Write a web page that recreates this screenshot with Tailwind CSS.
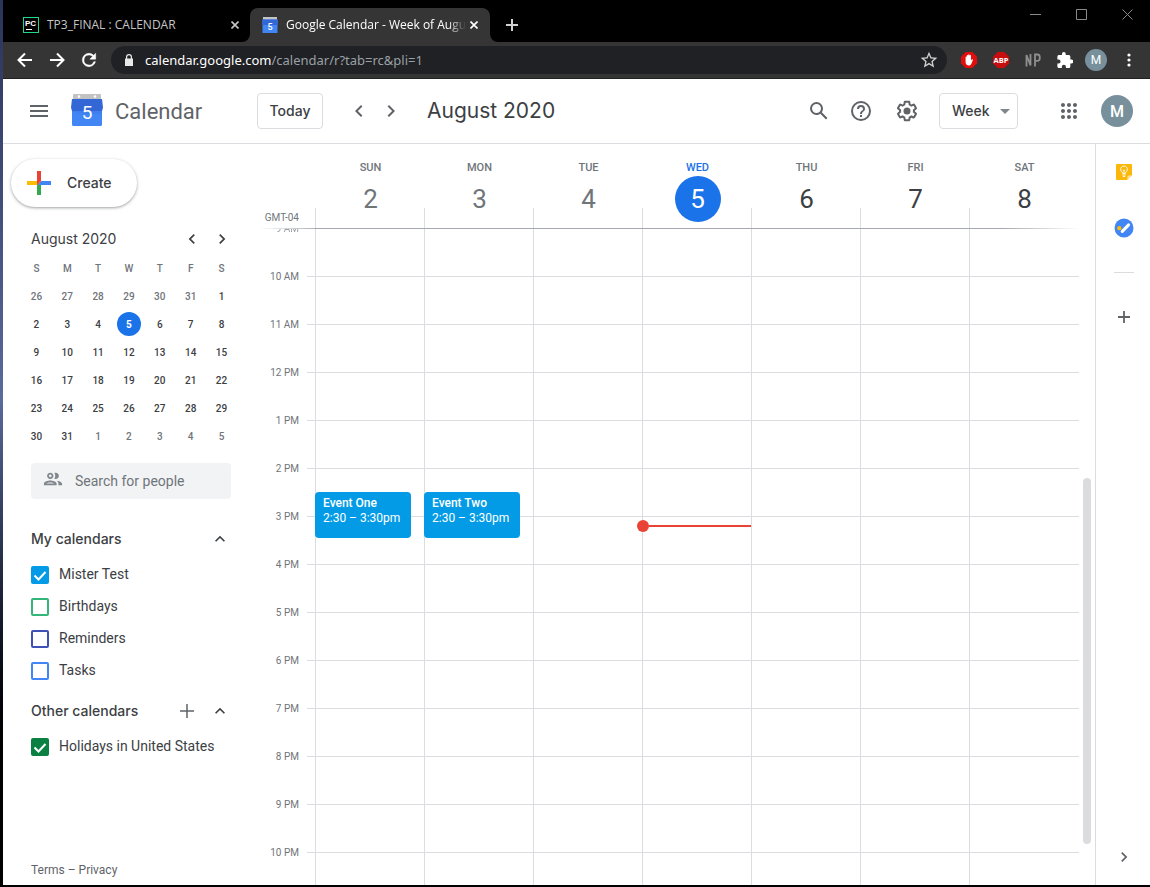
<!DOCTYPE html>
<html lang="en">
<head>
<meta charset="utf-8">
<title>Google Calendar - Week of August 2, 2020</title>
<script src="https://cdn.jsdelivr.net/npm/@tailwindcss/browser@4"></script>
</head>
<body class="h-screen overflow-hidden bg-[#0a0a10] font-[Roboto,sans-serif] text-[#3c4043]">
<div class="flex h-full flex-col bg-linear-to-b from-[#2c3358] from-0% via-[#5a6a9c] via-45% to-black to-88% pb-[2px] pl-[3px]">

  <!-- Browser tabs -->
  <div class="flex h-[42px] shrink-0 items-end bg-black font-['Open_Sans',sans-serif] text-xs text-white" role="tablist">
    <div class="flex h-[34px] w-[247px] items-center pr-[7px] pl-5 text-[#c6c6c6]">
      <svg class="mr-2 size-4 shrink-0" viewBox="0 0 16 16"><rect width="16" height="16" fill="#21d789"/><rect x="1" y="1" width="14" height="14" fill="#000"/><text x="2" y="9" font-family="Liberation Sans" font-weight="700" font-size="8" fill="#fff">PC</text><path d="M3 12h6v1H3z" fill="#fff"/></svg>
      <button role="tab" class="flex-1 text-left whitespace-nowrap">TP3_FINAL : CALENDAR</button>
      <button aria-label="Close tab" class="grid size-4 place-items-center"><svg class="size-2" viewBox="0 0 8 8" fill="none" stroke="currentColor" stroke-width="1.6"><path d="M.5.5l7 7M7.5.5l-7 7"/></svg></button>
    </div>
    <div class="relative flex h-[34px] w-[240px] items-center rounded-t-lg bg-[#353535] pr-2 pl-3">
      <svg class="absolute bottom-0 -left-2 size-2" viewBox="0 0 8 8"><path d="M8 0v8H0a8 8 0 0 0 8-8z" fill="#353535"/></svg>
      <svg class="absolute -right-2 bottom-0 size-2" viewBox="0 0 8 8"><path d="M0 0v8h8A8 8 0 0 1 0 0z" fill="#353535"/></svg>
      <svg class="mr-2 size-4 shrink-0" viewBox="0 0 32 32"><path d="M2 0h28v6H2z" fill="#c4c4c4"/><path d="M1 5h30l1 8-1 3v16H1V16l-1-3z" fill="#4285f4"/><path d="M1 5h30l1 8-2 3H2l-2-3z" fill="#3367d6"/><text x="16" y="25" text-anchor="middle" font-family="Roboto" font-weight="500" font-size="18" fill="#fff">5</text></svg>
      <button role="tab" aria-selected="true" class="flex-1 overflow-hidden mask-r-from-90% text-left whitespace-nowrap">Google Calendar - Week of Augu</button>
      <button aria-label="Close tab" class="grid size-4 shrink-0 place-items-center"><svg class="size-2" viewBox="0 0 8 8" fill="none" stroke="currentColor" stroke-width="1.6"><path d="M.5.5l7 7M7.5.5l-7 7"/></svg></button>
    </div>
    <button aria-label="New tab" class="ml-4 grid h-[34px] w-3 place-items-center text-[#d0d0d0]"><svg class="size-3" viewBox="0 0 12 12" fill="none" stroke="currentColor" stroke-width="2"><path d="M6 0v12M0 6h12"/></svg></button>
    <div class="ml-auto flex h-full w-[138px] text-[#8a8a8a]">
      <button aria-label="Minimize" class="flex h-7 flex-1 items-center justify-center"><svg class="size-[11px]" viewBox="0 0 11 11" stroke="currentColor" fill="none"><path d="M0 5.5h11"/></svg></button>
      <button aria-label="Maximize" class="flex h-7 flex-1 items-center justify-center"><svg class="size-[11px]" viewBox="0 0 11 11" stroke="currentColor" fill="none"><path d="M.5.5h10v10H.5z"/></svg></button>
      <button aria-label="Close" class="flex h-7 flex-1 items-center justify-center"><svg class="size-[11px]" viewBox="0 0 11 11" stroke="currentColor" fill="none"><path d="M.5.5l10 10M10.5.5l-10 10"/></svg></button>
    </div>
  </div>

  <!-- Browser toolbar -->
  <div class="flex h-[37px] shrink-0 items-center border-b border-[#202124] bg-[#353535] pr-[11px] pl-3 text-white">
    <div class="flex w-24 gap-3">
      <button aria-label="Back"><svg class="size-5" viewBox="0 0 20 20" fill="none" stroke="currentColor" stroke-width="2"><path d="M17 10H4M10 3.500L3.500 10l6.500 6.500"/></svg></button>
      <button aria-label="Forward"><svg class="size-5" viewBox="0 0 20 20" fill="none" stroke="currentColor" stroke-width="2"><path d="M3 10h13M10 3.500l6.500 6.500-6.500 6.500"/></svg></button>
      <button aria-label="Reload"><svg class="size-5" viewBox="0 0 24 24" fill="currentColor"><path stroke="currentColor" stroke-width=".6" d="M17.650 6.350A7.960 7.960 0 0 0 12 4a8 8 0 1 0 7.730 10h-2.080A6 6 0 1 1 12 6c1.660 0 3.140.69 4.220 1.780L13 11h7V4z"/></svg></button>
    </div>
    <div class="flex h-7 flex-1 items-center rounded-full bg-[#202124] pr-2 pl-3">
      <svg class="mr-[10px] size-3 shrink-0 text-[#e8e8e8]" viewBox="0 0 12 12" fill="currentColor"><path fill-rule="evenodd" d="M10 4.500H9V3a3 3 0 0 0-6 0v1.500H2V12h8zM4.200 4.500V3a1.800 1.800 0 0 1 3.600 0v1.500z"/></svg>
      <div role="textbox" aria-label="Address" contenteditable="true" class="flex-1 pt-px font-['Noto_Sans',sans-serif] text-[13px] text-[#9aa0a6]"><span class="text-white">calendar.google.com</span>/calendar/r?tab=rc&amp;pli=1</div>
      <button aria-label="Bookmark this tab"><svg class="size-5 text-[#d0d0d0]" viewBox="0 0 24 24" fill="currentColor"><path d="M22 9.240l-7.190-.62L12 2 9.190 8.630 2 9.240l5.460 4.730L5.820 21 12 17.270 18.180 21l-1.630-7.030zM12 15.400l-3.760 2.270 1-4.280-3.320-2.880 4.380-.38L12 6.100l1.710 4.040 4.380.38-3.320 2.880 1 4.280z"/></svg></button>
    </div>
    <div class="ml-[14px] flex items-center gap-4">
      <button aria-label="AdBlock"><svg class="size-4" viewBox="0 0 16 16"><path d="M4.700 0h6.600L16 4.700v6.600L11.300 16H4.700L0 11.300V4.700z" fill="#e40d0d"/><path d="M4.600 8.500V5c0-.8 1.200-.8 1.200 0v2.500V3.700c0-.9 1.400-.9 1.400 0V7 3c0-.9 1.400-.9 1.400 0v4-3.300c0-.9 1.400-.9 1.400 0V8.500l.7-1c.5-.6 1.400-.2 1.200.5l-1.400 3.400C9.900 12.800 9 13.400 8 13.400c-2.200 0-3.400-1.200-3.400-3.200z" fill="#fff"/></svg></button>
      <button aria-label="Adblock Plus"><svg class="size-4" viewBox="0 0 16 16"><path d="M4.700 0h6.600L16 4.700v6.600L11.300 16H4.700L0 11.300V4.700z" fill="#c70d0d"/><text x="8" y="10.700" text-anchor="middle" font-family="Open Sans" font-weight="700" font-size="7.500" fill="#fff">ABP</text></svg></button>
      <button aria-label="NP" class="w-4 text-center"><svg class="h-4 w-4" viewBox="0 0 16 16" fill="none" stroke="#8f8f8f" stroke-width="1.800"><path d="M1.500 14.500V3l4 10.500V2M10 14.500V2.500h2.500a2.200 3 0 0 1 0 6.300H10"/></svg></button>
      <button aria-label="Extensions"><svg class="size-4" viewBox="1.500 1 21 21" fill="currentColor"><path d="M20.500 11H19V7a2 2 0 0 0-2-2h-4V3.500a2.500 2.500 0 0 0-5 0V5H4a2 2 0 0 0-2 2v3.800h1.500a2.700 2.700 0 0 1 0 5.400H2V20c0 1.100.9 2 2 2h3.800v-1.500a2.700 2.700 0 0 1 5.400 0V22H17a2 2 0 0 0 2-2v-4h1.500a2.500 2.500 0 0 0 0-5z"/></svg></button>
    </div>
    <button aria-label="Profile" class="ml-3 grid size-[22px] place-items-center rounded-full bg-[#78909c] text-xs">M</button>
    <button aria-label="Menu" class="ml-3 grid h-5 w-5 place-items-center"><svg class="h-[14px] w-[4px]" viewBox="0 0 4 14" fill="currentColor"><circle cx="2" cy="2" r="1.600"/><circle cx="2" cy="7" r="1.600"/><circle cx="2" cy="12" r="1.600"/></svg></button>
  </div>

  <div class="flex min-h-0 flex-1 flex-col bg-white">
    <!-- App header -->
    <header class="flex h-[65px] shrink-0 items-center border-b border-[#dadce0] pr-[17px] pl-6 font-[Inter,sans-serif] text-[#5f6368]">
      <button aria-label="Main menu" class="grid size-6 place-items-center"><svg class="size-6" viewBox="0 0 24 24" fill="currentColor"><path d="M3 18h18v-2H3zm0-5h18v-2H3zm0-7v2h18V6z"/></svg></button>
      <svg class="mb-[2px] ml-5 size-8" viewBox="0 0 32 32"><path d="M3 0h26a1 1 0 0 1 1 1v5H2V1a1 1 0 0 1 1-1z" fill="#c2c2c2"/><circle cx="8" cy="2.500" r="1.300" fill="#fff"/><circle cx="24" cy="2.500" r="1.300" fill="#fff"/><path d="M1 15h30v15.500a1.500 1.500 0 0 1-1.500 1.500h-27A1.500 1.500 0 0 1 1 30.500z" fill="#4285f4"/><path d="M1 5h30l1 8.500-1 3.500H1l-1-3.500z" fill="#3367d6"/><path d="M1 17h30l-1 3H14z" fill="#3b78e7" opacity=".5"/><text x="16" y="25" text-anchor="middle" font-family="Roboto" font-size="19" fill="#fff">5</text></svg>
      <h1 class="ml-3 w-[142px] font-[Roboto,sans-serif] text-[22px]">Calendar</h1>
      <button class="h-9 w-[66px] rounded border border-[#dadce0] pb-px text-sm font-medium text-[#3c4043]">Today</button>
      <div class="ml-6 flex gap-2">
        <button aria-label="Previous week"><svg class="size-6" viewBox="0 0 24 24" fill="currentColor"><path d="M15.410 7.410L14 6l-6 6 6 6 1.410-1.410L10.830 12z"/></svg></button>
        <button aria-label="Next week"><svg class="size-6" viewBox="0 0 24 24" fill="currentColor"><path d="M10 6L8.590 7.410 13.170 12l-4.580 4.590L10 18l6-6z"/></svg></button>
      </div>
      <h2 class="ml-6 text-[21px] text-[#3c4043]">August 2020</h2>
      <div class="ml-auto flex items-center">
        <button aria-label="Search"><svg class="size-6" viewBox="0 0 24 24" fill="currentColor"><path d="M20.490 19l-5.730-5.730C15.530 12.200 16 10.910 16 9.500A6.500 6.500 0 1 0 9.500 16c1.410 0 2.700-.47 3.770-1.240L19 20.490 20.490 19zM5 9.500C5 7.010 7.010 5 9.500 5S14 7.010 14 9.500 11.990 14 9.500 14 5 11.990 5 9.500z"/></svg></button>
        <button aria-label="Support" class="ml-[18px]"><svg class="size-6" viewBox="0 0 24 24" fill="currentColor"><path d="M11 18h2v-2h-2zm1-16a10 10 0 1 0 0 20 10 10 0 0 0 0-20zm0 18a8 8 0 1 1 0-16 8 8 0 0 1 0 16zm0-14a4 4 0 0 0-4 4h2a2 2 0 1 1 4 0c0 2-3 1.750-3 5h2c0-2.250 3-2.500 3-5a4 4 0 0 0-4-4z"/></svg></button>
        <button aria-label="Settings menu" class="ml-[22px]"><svg class="size-6" viewBox="0 0 24 24" fill="currentColor"><path d="M13.850 22.250h-3.700c-.74 0-1.360-.54-1.450-1.270l-.27-1.890c-.27-.14-.53-.29-.79-.46l-1.800.72c-.7.26-1.470-.03-1.810-.65L2.200 15.530c-.35-.66-.2-1.440.36-1.880l1.530-1.190c-.01-.15-.02-.3-.02-.46 0-.15.01-.31.02-.46l-1.520-1.190c-.59-.45-.74-1.260-.37-1.880l1.850-3.190c.34-.62 1.110-.9 1.790-.63l1.810.73c.26-.17.52-.32.78-.46l.27-1.910c.09-.7.71-1.250 1.440-1.250h3.700c.74 0 1.360.54 1.450 1.270l.27 1.890c.27.14.53.29.79.46l1.800-.72c.71-.26 1.480.03 1.820.65l1.840 3.180c.36.66.2 1.440-.36 1.880l-1.520 1.190c.01.15.02.3.02.46s-.01.31-.02.46l1.520 1.190c.56.45.72 1.230.37 1.860l-1.860 3.220c-.34.62-1.110.9-1.800.63l-1.800-.72c-.26.17-.52.32-.78.46l-.27 1.910c-.1.68-.72 1.220-1.460 1.220zm-3.230-2h2.760l.37-2.550.53-.22c.44-.18.88-.44 1.340-.78l.45-.34 2.380.96 1.380-2.400-2.030-1.580.07-.56c.03-.26.06-.51.06-.78s-.03-.53-.06-.78l-.07-.56 2.030-1.580-1.390-2.400-2.390.96-.45-.35c-.42-.32-.87-.58-1.330-.77l-.52-.22-.37-2.550h-2.760l-.37 2.550-.53.21c-.44.19-.88.44-1.340.79l-.45.33-2.380-.95-1.390 2.390 2.030 1.580-.07.56a7 7 0 0 0-.06.79c0 .26.02.53.06.78l.07.56-2.030 1.580 1.380 2.400 2.390-.96.45.35c.43.33.86.58 1.330.77l.53.22.38 2.550z"/><circle cx="12" cy="12" r="3.500"/></svg></button>
        <div class="relative ml-5">
          <select aria-label="View" class="h-9 w-[79px] appearance-none rounded border border-[#dadce0] bg-white pb-px pl-3 text-sm font-medium text-[#3c4043]"><option>Week</option><option>Day</option><option>Month</option></select>
          <svg class="pointer-events-none absolute top-4 right-2 h-[5px] w-[10px]" viewBox="0 0 10 5" fill="#80868b"><path d="M0 0h10L5 5z"/></svg>
        </div>
        <button aria-label="Google apps" class="ml-[39px]"><svg class="size-6" viewBox="0 0 24 24" fill="currentColor"><path d="M6 8c1.100 0 2-.9 2-2s-.9-2-2-2-2 .9-2 2 .9 2 2 2zm6 12c1.100 0 2-.9 2-2s-.9-2-2-2-2 .9-2 2 .9 2 2 2zm-6 0c1.100 0 2-.9 2-2s-.9-2-2-2-2 .9-2 2 .9 2 2 2zm0-6c1.100 0 2-.9 2-2s-.9-2-2-2-2 .9-2 2 .9 2 2 2zm6 0c1.100 0 2-.9 2-2s-.9-2-2-2-2 .9-2 2 .9 2 2 2zm4-8c0 1.100.9 2 2 2s2-.9 2-2-.9-2-2-2-2 .9-2 2zm-4 2c1.100 0 2-.9 2-2s-.9-2-2-2-2 .9-2 2 .9 2 2 2zm6 6c1.100 0 2-.9 2-2s-.9-2-2-2-2 .9-2 2 .9 2 2 2zm0 6c1.100 0 2-.9 2-2s-.9-2-2-2-2 .9-2 2 .9 2 2 2z"/></svg></button>
        <button aria-label="Account" class="ml-5 grid size-8 place-items-center rounded-full bg-[#78909c] pt-px font-[Roboto,sans-serif] text-base font-medium text-white">M</button>
      </div>
    </header>

    <div class="flex min-h-0 flex-1">
      <!-- Sidebar -->
      <aside class="flex w-64 shrink-0 flex-col pt-[15px] pb-[7px] pl-7">
        <button class="-ml-5 flex h-12 w-[126px] items-center gap-[10px] rounded-full bg-white pl-[10px] font-[Inter,sans-serif] text-sm font-medium shadow-[0_1px_2px_0_rgba(60,64,67,0.3),0_1px_3px_1px_rgba(60,64,67,0.15)]">
          <svg class="size-9" viewBox="0 0 36 36"><path fill="#34A853" d="M16 16v14h4V20z"/><path fill="#4285F4" d="M30 16H20l-4 4h14z"/><path fill="#FBBC05" d="M6 16v4h10l4-4z"/><path fill="#EA4335" d="M20 16V6h-4v14z"/></svg>
          <span class="pb-px">Create</span>
        </button>
        <div class="mt-[17px] flex h-[30px] items-center font-[Inter,sans-serif]">
          <h2 class="w-[147px] pb-px text-sm">August 2020</h2>
          <button aria-label="Previous month" class="ml-1"><svg class="size-5" viewBox="0 0 24 24" fill="currentColor"><path d="M15.410 7.410L14 6l-6 6 6 6 1.410-1.410L10.830 12z"/></svg></button>
          <button aria-label="Next month" class="ml-[10px]"><svg class="size-5" viewBox="0 0 24 24" fill="currentColor"><path d="M10 6L8.590 7.410 13.170 12l-4.580 4.590L10 18l6-6z"/></svg></button>
        </div>
        <table class="-ml-[10px] w-[216px] table-fixed text-center text-[10px] font-medium">
          <thead class="text-[#70757a]"><tr class="h-7"><th class="font-medium">S</th><th class="font-medium">M</th><th class="font-medium">T</th><th class="font-medium">W</th><th class="font-medium">T</th><th class="font-medium">F</th><th class="font-medium">S</th></tr></thead>
          <tbody>
            <tr class="h-7"><td class="text-[#70757a]">26</td><td class="text-[#70757a]">27</td><td class="text-[#70757a]">28</td><td class="text-[#70757a]">29</td><td class="text-[#70757a]">30</td><td class="text-[#70757a]">31</td><td>1</td></tr>
            <tr class="h-7"><td>2</td><td>3</td><td>4</td><td class="p-0"><span class="mx-auto grid size-6 place-items-center rounded-full bg-[#1a73e8] font-bold text-white">5</span></td><td>6</td><td>7</td><td>8</td></tr>
            <tr class="h-7"><td>9</td><td>10</td><td>11</td><td>12</td><td>13</td><td>14</td><td>15</td></tr>
            <tr class="h-7"><td>16</td><td>17</td><td>18</td><td>19</td><td>20</td><td>21</td><td>22</td></tr>
            <tr class="h-7"><td>23</td><td>24</td><td>25</td><td>26</td><td>27</td><td>28</td><td>29</td></tr>
            <tr class="h-7"><td>30</td><td>31</td><td class="text-[#70757a]">1</td><td class="text-[#70757a]">2</td><td class="text-[#70757a]">3</td><td class="text-[#70757a]">4</td><td class="text-[#70757a]">5</td></tr>
          </tbody>
        </table>
        <label class="mt-[13px] flex h-9 w-[200px] items-center rounded bg-[#f1f3f4] pl-3">
          <svg class="mb-1 size-5 text-[#80868b]" viewBox="1 1 22 22" fill="currentColor"><path d="M9 13.750c-2.340 0-7 1.170-7 3.500V19h14v-1.750c0-2.330-4.660-3.500-7-3.500zM4.340 17c.84-.58 2.870-1.250 4.660-1.250s3.820.67 4.660 1.250zM9 12c1.930 0 3.500-1.570 3.500-3.500S10.930 5 9 5 5.500 6.570 5.500 8.500 7.070 12 9 12zm0-5c.83 0 1.500.67 1.500 1.500S9.830 10 9 10s-1.500-.67-1.500-1.500S8.170 7 9 7zm7.040 6.810c1.160.84 1.960 1.960 1.960 3.440V19h4v-1.750c0-2.020-3.500-3.170-5.960-3.440zM15 12c1.930 0 3.500-1.570 3.500-3.500S16.930 5 15 5c-.54 0-1.040.13-1.500.35.63.89 1 1.980 1 3.150s-.37 2.260-1 3.150c.46.22.96.35 1.500.35z"/></svg>
          <input type="text" aria-label="Search for people" placeholder="Search for people" class="ml-3 w-36 bg-transparent text-sm outline-none placeholder:text-[#70757a]">
        </label>

        <div class="mt-6 flex h-8 w-[200px] items-center justify-between font-[Inter,sans-serif] text-sm font-medium">
          <h3 class="pb-px">My calendars</h3>
          <button aria-label="Collapse my calendars" class="mr-px"><svg class="size-5" viewBox="0 0 24 24" fill="currentColor"><path d="M12 8l-6 6 1.410 1.410L12 10.830l4.590 4.580L18 14z"/></svg></button>
        </div>
        <div class="mt-1 text-sm">
          <label class="flex h-8 items-center gap-[10px]"><span class="grid size-[18px]"><input type="checkbox" checked class="col-start-1 row-start-1 size-[18px] appearance-none rounded-xs border-2 border-[#039be5] checked:bg-[#039be5]"><svg class="col-start-1 row-start-1 size-[18px]" viewBox="0 0 18 18" fill="none" stroke="#fff" stroke-width="2"><path d="M3.500 9.500l4 4 7-7.500"/></svg></span><span class="pb-[2px]">Mister Test</span></label>
          <label class="flex h-8 items-center gap-[10px]"><input type="checkbox" class="size-[18px] appearance-none rounded-xs border-2 border-[#33b679]"><span class="pb-[2px]">Birthdays</span></label>
          <label class="flex h-8 items-center gap-[10px]"><input type="checkbox" class="size-[18px] appearance-none rounded-xs border-2 border-[#3f51b5]"><span class="pb-[2px]">Reminders</span></label>
          <label class="flex h-8 items-center gap-[10px]"><input type="checkbox" class="size-[18px] appearance-none rounded-xs border-2 border-[#4285f4]"><span class="pb-[2px]">Tasks</span></label>
        </div>
        <div class="mt-2 flex h-8 w-[200px] items-center font-[Inter,sans-serif] text-sm font-medium">
          <h3 class="pb-px">Other calendars</h3>
          <button aria-label="Add other calendars" class="mr-[13px] ml-auto text-[#5f6368]"><svg class="size-5" viewBox="0 0 20 20" fill="none" stroke="currentColor" stroke-width="1.500"><path d="M10 3v14M3 10h14"/></svg></button>
          <button aria-label="Collapse other calendars" class="mr-px"><svg class="size-5" viewBox="0 0 24 24" fill="currentColor"><path d="M12 8l-6 6 1.410 1.410L12 10.830l4.590 4.580L18 14z"/></svg></button>
        </div>
        <label class="mt-1 flex h-8 items-center gap-[10px] text-sm"><span class="grid size-[18px]"><input type="checkbox" checked class="col-start-1 row-start-1 size-[18px] appearance-none rounded-xs border-2 border-[#0b8043] checked:bg-[#0b8043]"><svg class="col-start-1 row-start-1 size-[18px]" viewBox="0 0 18 18" fill="none" stroke="#fff" stroke-width="2"><path d="M3.500 9.500l4 4 7-7.500"/></svg></span><span class="pb-[2px]">Holidays in United States</span></label>
        <p class="mt-auto text-xs text-[#5f6368]"><a href="#terms">Terms</a> – <a href="#privacy">Privacy</a></p>
      </aside>

      <!-- Week view -->
      <main class="flex min-w-0 flex-1 flex-col">
        <div class="flex h-21 shrink-0 pr-4">
          <div class="flex w-14 items-end justify-end pr-4 pb-[3px] text-[10px] text-[#70757a]">GMT-04</div>
          <div class="grid flex-1 grid-cols-7 pr-px text-center text-[26px] text-[#3c4043]">
            <div class="relative flex flex-col items-center pt-4 pl-[2px] text-[#70757a]"><span class="h-4 text-[11px] leading-4 font-medium">SUN</span><span class="grid size-[46px] place-items-center">2</span><i class="absolute bottom-0 left-0 h-5 w-px bg-[#dadce0]"></i></div>
            <div class="relative flex flex-col items-center pt-4 pl-[2px] text-[#70757a]"><span class="h-4 text-[11px] leading-4 font-medium">MON</span><span class="grid size-[46px] place-items-center">3</span><i class="absolute bottom-0 left-0 h-5 w-px bg-[#dadce0]"></i></div>
            <div class="relative flex flex-col items-center pt-4 pl-[2px] text-[#70757a]"><span class="h-4 text-[11px] leading-4 font-medium">TUE</span><span class="grid size-[46px] place-items-center">4</span><i class="absolute bottom-0 left-0 h-5 w-px bg-[#dadce0]"></i></div>
            <div class="relative flex flex-col items-center pt-4 pl-[2px] text-[#1a73e8]"><span class="h-4 text-[11px] leading-4 font-medium">WED</span><span class="grid size-[46px] place-items-center rounded-full bg-[#1a73e8] text-white">5</span><i class="absolute bottom-0 left-0 h-5 w-px bg-[#dadce0]"></i></div>
            <div class="relative flex flex-col items-center pt-4 pl-[2px]"><span class="h-4 text-[11px] leading-4 font-medium text-[#70757a]">THU</span><span class="grid size-[46px] place-items-center">6</span><i class="absolute bottom-0 left-0 h-5 w-px bg-[#dadce0]"></i></div>
            <div class="relative flex flex-col items-center pt-4 pl-[2px]"><span class="h-4 text-[11px] leading-4 font-medium text-[#70757a]">FRI</span><span class="grid size-[46px] place-items-center">7</span><i class="absolute bottom-0 left-0 h-5 w-px bg-[#dadce0]"></i></div>
            <div class="relative flex flex-col items-center pt-4 pl-[2px]"><span class="h-4 text-[11px] leading-4 font-medium text-[#70757a]">SAT</span><span class="grid size-[46px] place-items-center">8</span><i class="absolute bottom-0 left-0 h-5 w-px bg-[#dadce0]"></i></div>
          </div>
        </div>
        <div class="mr-4 h-px shrink-0 bg-linear-to-r from-transparent via-[#a0a3a8] via-8% to-transparent"><div class="ml-14 h-px bg-linear-to-r from-[#a5a8ac] from-90% to-white"></div></div>
        <div class="flex min-h-0 flex-1 overflow-hidden">
          <div class="-mt-[25px] w-12 shrink-0 pr-2 text-right text-[10px] text-[#70757a]">
            <div class="flex h-12 items-center justify-end opacity-70">9 AM</div>
            <div class="flex h-12 items-center justify-end">10 AM</div>
            <div class="flex h-12 items-center justify-end">11 AM</div>
            <div class="flex h-12 items-center justify-end">12 PM</div>
            <div class="flex h-12 items-center justify-end">1 PM</div>
            <div class="flex h-12 items-center justify-end">2 PM</div>
            <div class="flex h-12 items-center justify-end">3 PM</div>
            <div class="flex h-12 items-center justify-end">4 PM</div>
            <div class="flex h-12 items-center justify-end">5 PM</div>
            <div class="flex h-12 items-center justify-end">6 PM</div>
            <div class="flex h-12 items-center justify-end">7 PM</div>
            <div class="flex h-12 items-center justify-end">8 PM</div>
            <div class="flex h-12 items-center justify-end">9 PM</div>
            <div class="flex h-12 items-center justify-end">10 PM</div>
          </div>
          <div class="grid flex-1">
            <div class="col-start-1 row-start-1 divide-y divide-[#dadce0]">
              <div class="h-12"></div><div class="h-12"></div><div class="h-12"></div><div class="h-12"></div><div class="h-12"></div><div class="h-12"></div><div class="h-12"></div><div class="h-12"></div><div class="h-12"></div><div class="h-12"></div><div class="h-12"></div><div class="h-12"></div><div class="h-12"></div><div class="h-12"></div>
            </div>
            <div class="col-start-1 row-start-1 ml-2 grid grid-cols-7 pr-px text-xs text-white">
              <div class="relative border-l border-[#dadce0]">
                <button class="absolute top-[263px] -left-px flex h-[46px] w-[96px] flex-col rounded bg-[#039be5] px-2 pt-1 text-left leading-[15px]"><span class="font-medium">Event One</span><span class="whitespace-nowrap">2:30 – 3:30pm</span></button>
              </div>
              <div class="relative border-l border-[#dadce0]">
                <button class="absolute top-[263px] -left-px flex h-[46px] w-[96px] flex-col rounded bg-[#039be5] px-2 pt-1 text-left leading-[15px]"><span class="font-medium">Event Two</span><span class="whitespace-nowrap">2:30 – 3:30pm</span></button>
              </div>
              <div class="border-l border-[#dadce0]"></div>
              <div class="relative border-l border-[#dadce0]">
                <div class="absolute top-[291px] right-0 -left-[6px] flex h-3 items-center"><i class="size-3 rounded-full bg-[#ea4335]"></i><i class="h-[2px] flex-1 bg-[#ea4335]"></i></div>
              </div>
              <div class="border-l border-[#dadce0]"></div>
              <div class="border-l border-[#dadce0]"></div>
              <div class="border-l border-[#dadce0]"></div>
            </div>
          </div>
          <div class="flex w-4 flex-col px-1 pt-[249px] pb-[41px]"><div class="flex-1 rounded-full bg-[#dadce0]"></div></div>
        </div>
      </main>

      <!-- Side panel -->
      <aside class="flex w-[55px] shrink-0 flex-col items-center border-l border-[#dadce0] pt-5 pb-[18px] pl-[2px] text-[#5f6368]">
        <button aria-label="Keep"><svg class="block size-4" viewBox="0 0 16 16"><path d="M1 0h14a1 1 0 0 1 1 1v10l-5 5H1a1 1 0 0 1-1-1V1a1 1 0 0 1 1-1z" fill="#fbb80a"/><path d="M16 11.500L11.500 16v-3.500a1 1 0 0 1 1-1z" fill="#fde293"/><path d="M6.500 9.500v-1A3.400 3.400 0 1 1 9.500 8.500v1zM6.300 11h3.400M6.800 12.500h2.400M6.800 5.800l1.200 1 1.200-1M8 7v2.500" fill="none" stroke="#fff" stroke-width=".9"/></svg></button>
        <button aria-label="Tasks" class="mt-[38px]"><svg class="block size-5" viewBox="0 0 20 20"><circle cx="10" cy="10" r="9.500" fill="#4285f4"/><circle cx="5.300" cy="10.200" r="2.100" fill="#fbbc04"/><path d="M8.300 13.400l6.200-6.400" stroke="#fff" stroke-width="3.200" stroke-linecap="round"/></svg></button>
        <div class="mt-[34px] h-px w-5 bg-[#dadce0]"></div>
        <button aria-label="Get add-ons" class="mt-[34px]"><svg class="block size-5" viewBox="0 0 20 20" fill="none" stroke="currentColor" stroke-width="1.800"><path d="M10 4v12M4 10h12"/></svg></button>
        <button aria-label="Hide side panel" class="mt-auto"><svg class="block size-5" viewBox="0 0 24 24" fill="currentColor"><path d="M10 6L8.590 7.410 13.170 12l-4.580 4.590L10 18l6-6z"/></svg></button>
      </aside>
    </div>
  </div>
</div>
</body>
</html>
